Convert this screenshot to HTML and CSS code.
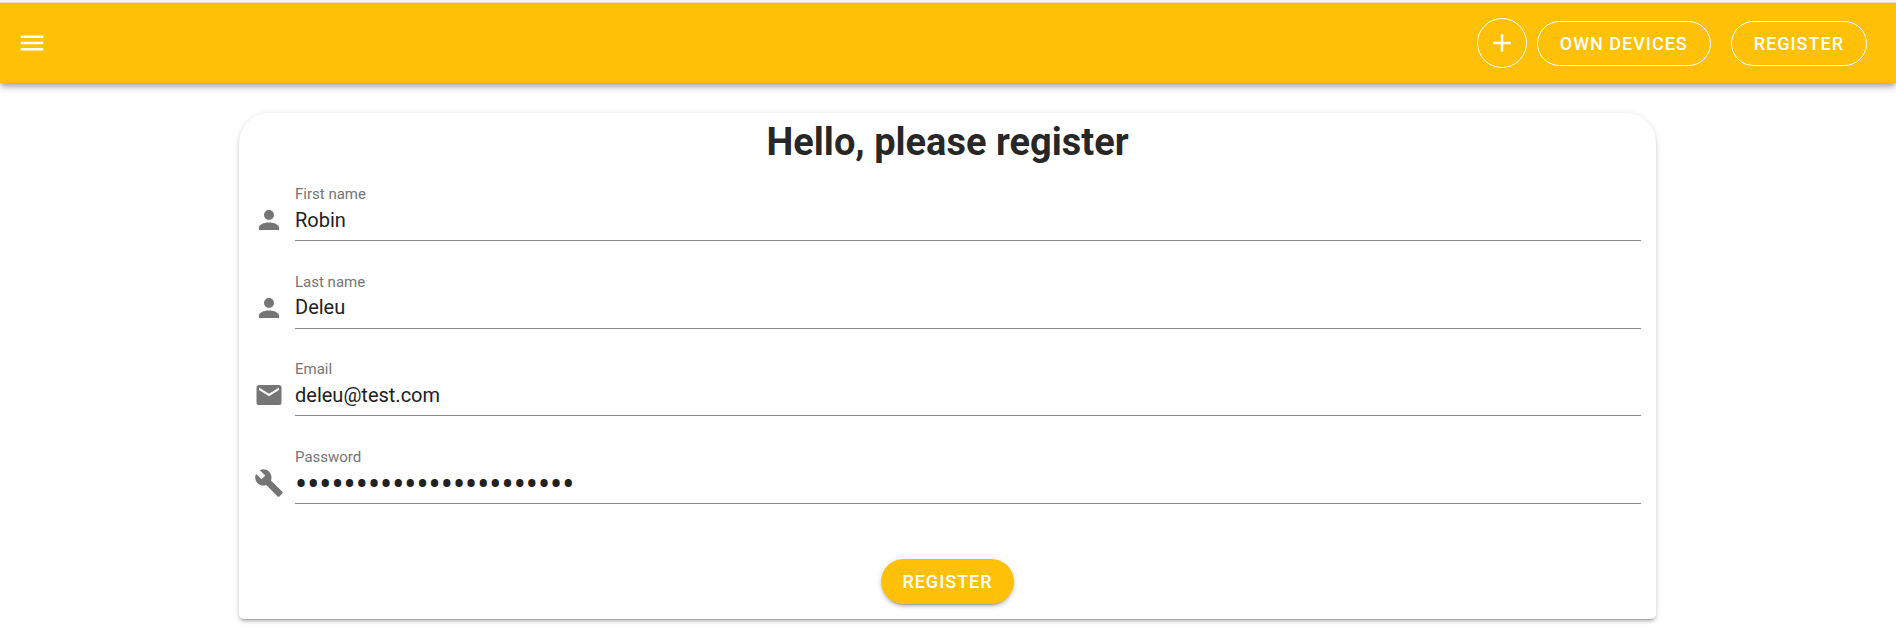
FILE: index.html
```html
<!DOCTYPE html>
<html lang="en">
<head>
<meta charset="utf-8">
<meta name="viewport" content="width=device-width, initial-scale=1">
<title>Register</title>
<link rel="stylesheet" href="styles.css">
</head>
<body>
<header class="app-bar">
  <button class="icon-button" type="button" aria-label="Menu">
    <svg class="icon" viewBox="0 0 24 24"><path d="M3,6H21V8H3V6M3,11H21V13H3V11M3,16H21V18H3V16Z"/></svg>
  </button>
  <nav class="actions">
    <button class="button button-round" type="button" aria-label="Add">
      <svg class="icon" viewBox="0 0 24 24"><path d="M19,13H13V19H11V13H5V11H11V5H13V11H19V13Z"/></svg>
    </button>
    <button class="button button-outlined" type="button">OWN DEVICES</button>
    <button class="button button-outlined button-spaced" type="button">REGISTER</button>
  </nav>
</header>
<main class="page">
  <form class="card">
    <h1 class="title">Hello, please register</h1>
    <div class="fields">
      <div class="field">
        <svg class="icon" viewBox="0 0 24 24"><path d="M12,4A4,4 0 0,1 16,8A4,4 0 0,1 12,12A4,4 0 0,1 8,8A4,4 0 0,1 12,4M12,14C16.42,14 20,15.79 20,18V20H4V18C4,15.79 7.58,14 12,14Z"/></svg>
        <div class="control">
          <label class="label" for="first-name">First name</label>
          <input class="input" id="first-name" type="text" value="Robin">
        </div>
      </div>
      <div class="field">
        <svg class="icon" viewBox="0 0 24 24"><path d="M12,4A4,4 0 0,1 16,8A4,4 0 0,1 12,12A4,4 0 0,1 8,8A4,4 0 0,1 12,4M12,14C16.42,14 20,15.79 20,18V20H4V18C4,15.79 7.58,14 12,14Z"/></svg>
        <div class="control">
          <label class="label" for="last-name">Last name</label>
          <input class="input" id="last-name" type="text" value="Deleu">
        </div>
      </div>
      <div class="field">
        <svg class="icon" viewBox="0 0 24 24"><path d="M20,8L12,13L4,8V6L12,11L20,6M20,4H4C2.89,4 2,4.89 2,6V18A2,2 0 0,0 4,20H20A2,2 0 0,0 22,18V6C22,4.89 21.1,4 20,4Z"/></svg>
        <div class="control">
          <label class="label" for="email">Email</label>
          <input class="input" id="email" type="email" value="deleu@test.com">
        </div>
      </div>
      <div class="field">
        <svg class="icon" viewBox="0 0 24 24"><path d="M22.7,19L13.6,9.9C14.5,7.6 14,4.9 12.1,3C10.1,1 7.1,0.6 4.7,1.7L9,6L6,9L1.6,4.7C0.4,7.1 0.9,10.1 2.9,12.1C4.8,14 7.5,14.5 9.8,13.6L18.9,22.7C19.3,23.1 19.9,23.1 20.3,22.7L22.6,20.4C23.1,20 23.1,19.3 22.7,19Z"/></svg>
        <div class="control">
          <label class="label" for="password">Password</label>
          <input class="input input-password" id="password" type="password" value="correcthorsebatterystap">
        </div>
      </div>
    </div>
    <button class="button button-filled" type="submit">REGISTER</button>
  </form>
</main>
</body>
</html>
```
FILE: styles.css
```css
* {
  box-sizing: border-box;
}

body {
  margin: 0;
  border-top: 2px solid #f5f5f5;
  background: #fff;
  color: rgba(0, 0, 0, 0.87);
  font-family: Roboto, sans-serif;
  font-size: 20px;
}

.app-bar {
  display: flex;
  align-items: center;
  justify-content: space-between;
  height: 81px;
  padding: 0 29px 0 17px;
  border-top: 1px solid #e6d7ac;
  background: #ffc107;
  color: #fff;
  box-shadow: 0 3px 5px -1px rgba(0, 0, 0, 0.2), 0 5px 6px rgba(0, 0, 0, 0.14), 0 1px 13px rgba(0, 0, 0, 0.12);
}

.actions {
  display: flex;
  align-items: center;
  gap: 10px;
}

.icon {
  display: block;
  flex: none;
  width: 30px;
  height: 30px;
  fill: currentColor;
}

.icon-button {
  padding: 0;
  border: 0;
  background: none;
  color: inherit;
}

.button {
  height: 45px;
  padding: 0 21px;
  border: 0;
  border-radius: 35px;
  background: none;
  color: #fff;
  font: 500 18px Roboto, sans-serif;
  letter-spacing: 1px;
}

.button-outlined {
  padding: 0 22px;
  border: 1px solid;
}

.button-round {
  display: grid;
  place-items: center;
  width: 50px;
  height: 50px;
  padding: 0;
  border: 1px solid;
  border-radius: 50%;
}

.button-spaced {
  margin-left: 10px;
}

.button-filled {
  background: #ffc107;
  box-shadow: 0 4px 1px -3px rgba(0, 0, 0, 0.2), 0 3px 3px rgba(0, 0, 0, 0.14), 0 1px 6px rgba(0, 0, 0, 0.12);
}

.page {
  padding: 30px 240px 13px 239px;
}

.card {
  display: flex;
  flex-direction: column;
  align-items: center;
  padding: 0 15px 15px;
  border-radius: 30px 30px 5px 5px;
  background: #fff;
  box-shadow: 0 4px 1px -3px rgba(0, 0, 0, 0.2), 0 3px 3px rgba(0, 0, 0, 0.14), 0 1px 6px rgba(0, 0, 0, 0.12);
}

.title {
  margin: 0;
  font-size: 38px;
  font-weight: 700;
  line-height: 58px;
}

.fields {
  display: grid;
  grid-auto-rows: 1fr;
  align-self: stretch;
  min-height: 350px;
  margin: 12px 0 26px;
}

.field {
  display: flex;
  align-items: start;
  gap: 11px;
  color: #757575;
}

.field .icon {
  margin-top: 22px;
}

.control {
  display: flex;
  flex: 1;
  flex-direction: column;
}

.label {
  font-size: 15px;
  line-height: 22px;
}

.input {
  height: 36px;
  padding: 0 0 6px;
  border: 0;
  border-bottom: 1px solid #8a8a8a;
  outline: 0;
  background: none;
  color: #212121;
  font: 400 20px Roboto, sans-serif;
}

.input-password {
  padding: 0;
  font-size: 36px;
}
```
